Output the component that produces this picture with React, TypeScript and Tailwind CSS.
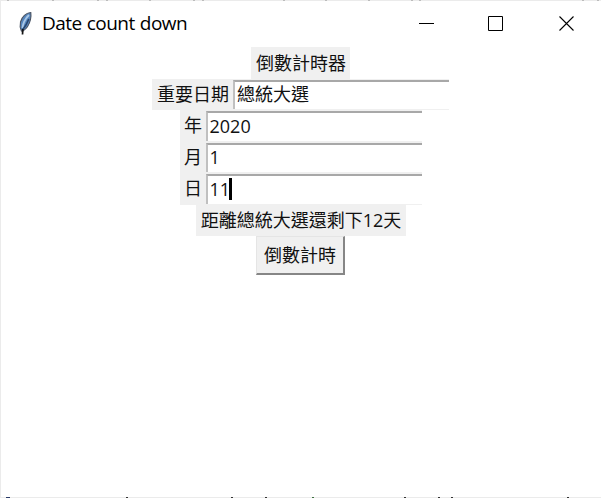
import type { ReactNode } from "react";

const cjk = "font-['Open_Sans','Noto_Sans_CJK_TC',sans-serif]";

function Label({ children, className }: { children: ReactNode; className: string }) {
  return (
    <div className={`flex items-center justify-center whitespace-nowrap bg-[#f0f0f0] pl-px ${className}`}>
      {children}
    </div>
  );
}

function Field({ label, labelWidth, value, focused }: { label: string; labelWidth: string; value: string; focused?: boolean }) {
  return (
    <div className="flex h-[31.5px] border-b border-[#f0f0f0] bg-[#f0f0f0]">
      <Label className={labelWidth}>{label}</Label>
      <div className="mt-px flex w-[216px] items-center border-l-2 border-t-2 border-l-[#c0c0c0] border-t-[#a8a8a8] bg-white pb-[2px] pl-[2px]">
        <span className="whitespace-nowrap">{value}</span>
        {focused && <span className="-ml-px h-[22px] w-[3px] bg-black" />}
      </div>
    </div>
  );
}

function Feather() {
  return (
    <svg className="h-[26px] w-[16px]" viewBox="0 0 16 26">
      <path d="M13.800 1.500C9 2 5 6 3.500 11c-.8 3.500-.6 6 .9 9l1.200.2C9.500 18 12.500 13 13.500 8.500c.5-2.500.6-5 .3-7z" fill="#5585bd" stroke="#4a5260" strokeWidth="1.100" />
      <path d="M12 4C8 8 6 12 5.500 17" fill="none" stroke="#a9c7e6" strokeWidth="1.800" />
      <path d="M11.800 8C10 13 8 16 5.500 19" fill="none" stroke="#28466f" strokeWidth="1.600" />
      <path d="M5.800 18L5.500 23.500" fill="none" stroke="#151515" strokeWidth="1.700" />
    </svg>
  );
}

const topMarks = [6, 51, 96, 105, 148, 192, 201, 282, 324, 367, 410, 418, 581, 596];
const bottomMarks = [125, 230, 264, 403, 437, 450, 566];

/* Slivers of the page behind the window, visible along its outer edge. */
function EdgeMarks({ marks, className, color }: { marks: number[]; className: string; color: string }) {
  return (
    <svg className={`absolute left-0 h-px w-[600px] ${className}`} viewBox="0 0 600 1" shapeRendering="crispEdges">
      {marks.map((x) => (
        <rect key={x} x={x} width="2" height="1" fill={color} />
      ))}
    </svg>
  );
}

export default function App() {
  return (
    <div className={`relative flex h-[498px] w-[601px] flex-col border-y border-l border-[#ebebeb] bg-white text-[18px] leading-none text-[#111] ${cjk}`}>
      <EdgeMarks marks={topMarks} className="-top-px" color="#bcbcbc" />
      <EdgeMarks marks={bottomMarks} className="-bottom-px" color="#333333" />
      <EdgeMarks marks={[5, 7]} className="-bottom-px" color="#283966" />
      <EdgeMarks marks={[311]} className="-bottom-px" color="#3c7040" />
      <header className="flex h-[46px] shrink-0 items-center pl-[16px]">
        <Feather />
        <span className="-mt-[2px] ml-[9px] whitespace-nowrap font-['Open_Sans','Noto_Sans',sans-serif] text-[19px] tracking-[-0.55px] text-black [word-spacing:0.8px]">Date count down</span>
        <div className="ml-auto flex items-center pr-[26px]">
          <svg className="h-4 w-4" viewBox="0 0 16 16" fill="none" stroke="black">
            <path d="M0 7.500h15" />
          </svg>
          <svg className="ml-[53px] h-4 w-4" viewBox="0 0 16 16" fill="none" stroke="black">
            <path d="M.5.5h14v14H.5z" />
          </svg>
          <svg className="ml-[55px] h-4 w-4" viewBox="0 0 16 16" fill="none" stroke="black" strokeWidth="1.100">
            <path d="M.5.5l14 14M14.500.5l-14 14" />
          </svg>
        </div>
      </header>
      <main className="flex flex-col items-center pr-px">
        <Label className="h-[31.500px] w-[99px]">倒數計時器</Label>
        <Field label="重要日期" labelWidth="w-[81px]" value="總統大選" />
        <Field label="年" labelWidth="w-[26px]" value="2020" />
        <Field label="月" labelWidth="w-[26px]" value="1" />
        <Field label="日" labelWidth="w-[26px]" value="11" focused />
        <Label className="h-[31.500px] w-[210px]">距離總統大選還剩下12天</Label>
        <button className="h-[39px] w-[89px] whitespace-nowrap border-b-2 border-l border-r-2 border-t border-b-[#868686] border-l-[#e5e5e5] border-r-[#868686] border-t-[#e5e5e5] bg-[#f0f0f0]">
          倒數計時
        </button>
      </main>
    </div>
  );
}
